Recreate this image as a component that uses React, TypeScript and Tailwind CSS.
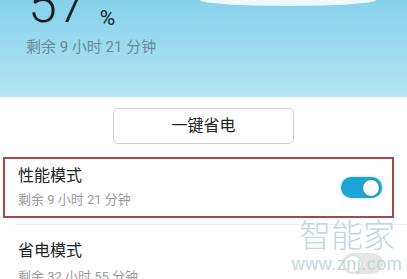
import React from "react";

const cjk = { fontFamily: '"Roboto", "Noto Sans CJK SC", sans-serif' };

function Toggle({ on }: { on: boolean }) {
  return on ? (
    <div className="w-[41px] h-[21px] rounded-full bg-[#1ba4d5] flex items-center justify-end pr-[2px] shadow-[0_0_2px_rgba(27,164,213,0.6)]">
      <div className="w-[18px] h-[18px] rounded-full bg-white border border-[#1588b2]" />
    </div>
  ) : (
    <div className="w-[41px] h-[21px] rounded-full bg-[#e6e6e6] flex items-center justify-start pl-[2px]">
      <div className="w-[18px] h-[18px] rounded-full bg-white border border-[#d8d8d8]" />
    </div>
  );
}

export default function App() {
  return (
    <div className="w-[407px] h-[279px] overflow-hidden bg-white relative" style={cjk}>
      <div className="relative h-[97px] bg-linear-to-b from-[#86d2ea] to-[#b3e4f2] overflow-hidden">
        <div className="absolute left-[200px] top-0 w-[176px] h-[6px] rounded-b-[50%_100%] bg-[#eef9fc]" />
        <div className="relative flex items-start pl-[28px] -mt-[21px]">
          <span className="text-[52px] leading-[52px] font-light text-[#17202a] tracking-[1px]">57</span>
          <span className="text-[21px] leading-[21px] text-[#17202a] ml-[12px] mt-[29px]">%</span>
        </div>
        <div className="pl-[26px] mt-[6px] text-[15px] leading-[20px] text-[#6a8a99]">剩余 9 小时 21 分钟</div>
      </div>
      <div className="flex justify-center pt-[11px]">
        <div className="w-[181px] h-[36px] border border-[#cfcfcf] rounded-[5px] flex items-center justify-center text-[16px] text-[#222]">
          一键省电
        </div>
      </div>
      <div className="mx-[3px] mt-[13px] w-[391px] h-[61px] border-2 border-[#a8474a] flex items-center justify-between pl-[13px] pr-[10px]">
        <div className="flex flex-col">
          <span className="text-[16px] leading-[22px] text-[#222]">性能模式</span>
          <span className="text-[13px] leading-[20px] text-[#9a9a9a] mt-[3px]">剩余 9 小时 21 分钟</span>
        </div>
        <Toggle on />
      </div>
      <div className="ml-[15px] mt-[6px] h-px bg-[#eeeeee]" />
      <div className="flex items-center justify-between pl-[18px] pr-[24px] pt-[15px]">
        <div className="flex flex-col">
          <span className="text-[16px] leading-[22px] text-[#222]">省电模式</span>
          <span className="text-[13px] leading-[20px] text-[#9a9a9a] mt-[5px]">剩余 32 小时 55 分钟</span>
        </div>
        <Toggle on={false} />
      </div>
      <div className="absolute left-[297px] top-[217px] w-[100px] flex flex-col items-center text-[#c3d6dd] pointer-events-none whitespace-nowrap">
        <span className="text-[32px] leading-[38px] font-light">智能家</span>
        <span className="text-[18px] leading-[18px] tracking-[0.5px]" style={{ fontFamily: '"Liberation Sans", sans-serif' }}>www.znj.com</span>
      </div>
    </div>
  );
}
